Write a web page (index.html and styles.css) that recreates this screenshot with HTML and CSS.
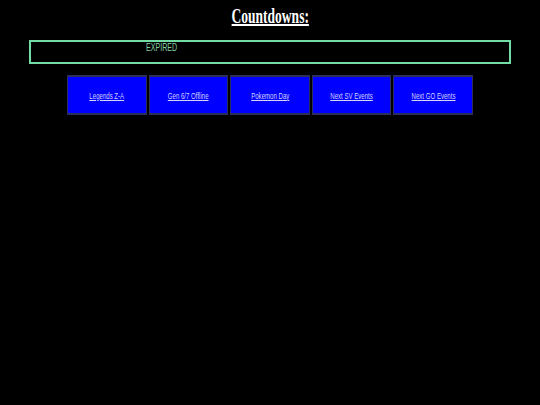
FILE: index.html
```html
<!DOCTYPE html>
<html lang="en">
<head>
    <meta charset="UTF-8">
    <meta name="viewport" content="width=device-width, initial-scale=1.0">
    <title>Countdowns</title>
    <link rel="stylesheet" href="styles.css">
</head>
<body>

    <div class="title"><span class="narrow">Countdowns:</span></div>

    <!-- Countdown readout -->
    <div class="countdown-box">
        <div class="countdown-text"><span class="narrow left" id="countdown">EXPIRED</span></div>
    </div>

    <!-- Countdown picker -->
    <div class="button-row">
        <button class="countdown-btn"><a class="narrow" href="#">Legends Z-A</a></button>
        <button class="countdown-btn"><a class="narrow" href="#">Gen 6/7 Offline</a></button>
        <button class="countdown-btn"><a class="narrow" href="#">Pokemon Day</a></button>
        <button class="countdown-btn"><a class="narrow" href="#">Next SV Events</a></button>
        <button class="countdown-btn"><a class="narrow" href="#">Next GO Events</a></button>
    </div>

</body>
</html>
```

FILE: styles.css
```css
body {
    background-color: #000;
    color: #fff;
    margin: 0;
    padding-top: 5px;
}
/* squeezed lettering */
.narrow {
    display: inline-block;
    transform: scaleX(0.675);
}
.narrow.left {
    transform-origin: 0 50%;
}
.title {
    font-family: "Liberation Serif", "Times New Roman", serif;
    font-size: 20px;
    font-weight: bold;
    text-decoration: underline;
    text-align: center;
    line-height: 23px;
    margin-bottom: 12px;
}
.title .narrow {
    text-decoration: underline;
}
.countdown-box {
    margin: 0 29px;
    height: 20px;
    border: 2px solid #72dca4;
}
.countdown-text {
    font-family: "Liberation Sans", Arial, sans-serif;
    font-size: 10.5px;
    line-height: 1;
    color: #84cfa2;
    padding-left: 115px;
}
.button-row {
    display: flex;
    justify-content: center;
    gap: 2px;
    margin-top: 11px;
}
.countdown-btn {
    width: 79.6px;
    height: 40px;
    background-color: #0000ff;
    border: 2px solid #2e2e5c;
    border-left-width: 1.5px;
    border-right-width: 1.5px;
    padding: 0 0 2px;
    margin: 0;
    cursor: pointer;
}
.countdown-btn a {
    font-family: "Liberation Sans", Arial, sans-serif;
    font-size: 9px;
    color: #d4d4ff;
    text-decoration: underline;
    white-space: nowrap;
}
```
